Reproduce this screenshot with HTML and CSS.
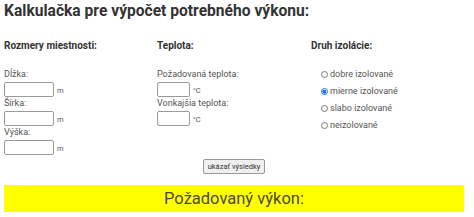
FILE: index.html
```html
<!DOCTYPE html>
<html lang="sk">
<head>
  <meta charset="UTF-8">
  <title>Kalkulačka výkonu</title>
  <link rel="stylesheet" href="styles.css">
</head>
<body>
  <div class="page">
    <h1>Kalkulačka pre výpočet potrebného výkonu:</h1>

    <div class="columns">
      <div class="col">
        <h2>Rozmery miestnosti:</h2>
        <label>Dĺžka:</label>
        <div class="field"><input type="text" class="box-wide"><span class="unit">m</span></div>
        <label>Šírka:</label>
        <div class="field"><input type="text" class="box-wide"><span class="unit">m</span></div>
        <label>Výška:</label>
        <div class="field"><input type="text" class="box-wide"><span class="unit">m</span></div>
      </div>

      <div class="col">
        <h2>Teplota:</h2>
        <label>Požadovaná teplota:</label>
        <div class="field"><input type="text" class="box-small"><span class="unit">°C</span></div>
        <label>Vonkajšia teplota:</label>
        <div class="field"><input type="text" class="box-small"><span class="unit">°C</span></div>
      </div>

      <div class="col">
        <h2>Druh izolácie:</h2>
        <div class="radios">
          <label class="radio"><input type="radio" name="izolacia">dobre izolované</label>
          <label class="radio"><input type="radio" name="izolacia" checked>mierne izolované</label>
          <label class="radio"><input type="radio" name="izolacia">slabo izolované</label>
          <label class="radio"><input type="radio" name="izolacia">neizolované</label>
        </div>
      </div>
    </div>

    <div class="actions">
      <button type="button">ukázať výsledky</button>
    </div>

    <div class="result">Požadovaný výkon:</div>
  </div>
</body>
</html>
```

FILE: styles.css
```css
body {
  margin: 0;
  background: #fff;
  font-family: Roboto, "Liberation Sans", sans-serif;
  color: #555;
}
.page {
  width: 460px;
  margin-left: 4px;
}
h1 {
  margin: 0;
  font-size: 15.6px;
  line-height: 22px;
  font-weight: bold;
  color: #333;
}
.columns {
  display: grid;
  grid-template-columns: 153px 154px 153px;
  margin-top: 18px;
}
h2 {
  margin: 0 0 17px;
  font-size: 10px;
  line-height: 12px;
  font-weight: bold;
  color: #333;
}
.col > label {
  display: block;
  font-size: 9px;
  line-height: 11px;
  color: #555;
}
.field {
  display: flex;
  align-items: flex-end;
  margin: 2px 0 1px;
}
.field input {
  box-sizing: border-box;
  height: 15px;
  margin: 0;
  padding: 0 2px;
  border: 1px solid #9a9a9a;
  border-radius: 2px;
  background: #fff;
}
.box-wide {
  width: 50px;
}
.box-small {
  width: 33px;
}
.unit {
  font-size: 7.5px;
  line-height: 9px;
  margin-left: 3px;
  margin-bottom: 2px;
  color: #555;
}
.radios {
  display: flex;
  flex-direction: column;
  padding-left: 10px;
  gap: 6px;
}
.radio {
  display: flex;
  align-items: center;
  font-size: 9px;
  line-height: 11px;
  color: #555;
}
.radio input {
  appearance: none;
  box-sizing: border-box;
  width: 7px;
  height: 7px;
  margin: 0 2px 0 0;
  border: 1px solid #777;
  border-radius: 50%;
  background: #fff;
}
.radio input:checked {
  border-color: #1a73e8;
  background: radial-gradient(circle, #1a73e8 0 2px, #fff 2px);
}
.actions {
  display: flex;
  justify-content: center;
  margin-top: 3px;
}
button {
  height: 15px;
  padding: 0 4px;
  font-family: Roboto, "Liberation Sans", sans-serif;
  font-size: 7.5px;
  color: #333;
  background: #efefef;
  border: 1px solid #9a9a9a;
  border-radius: 2px;
}
.result {
  margin-top: 11px;
  height: 27px;
  line-height: 27px;
  background: #ffff00;
  text-align: center;
  font-size: 16.5px;
  color: #4a4a3a;
}
```
